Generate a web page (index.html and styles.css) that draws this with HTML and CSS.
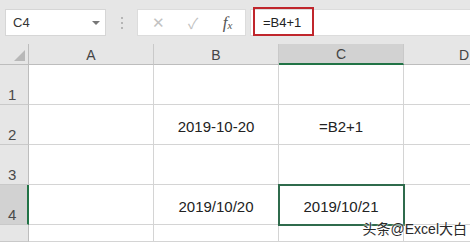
FILE: index.html
```html
<!DOCTYPE html>
<html lang="zh-CN">
<head>
    <meta charset="UTF-8">
    <meta name="viewport" content="width=device-width, initial-scale=1.0">
    <title>Excel</title>
    <link rel="stylesheet" href="styles.css">
</head>
<body>
    <div class="toolbar">
        <div class="namebox">
            <span>C4</span>
            <span class="caret"></span>
        </div>
        <div class="grip"><i></i><i></i><i></i></div>
        <div class="tools">
            <span class="tool">&#x2715;</span>
            <span class="tool">&#x2713;</span>
            <span class="tool fx">f<sub>x</sub></span>
        </div>
        <div class="formula">
            <span class="mark">=B4+1</span>
        </div>
    </div>

    <div class="sheet">
        <div class="corner"><span class="tri"></span></div>
        <div class="colhead">A</div>
        <div class="colhead">B</div>
        <div class="colhead active">C</div>
        <!-- column D runs past the window, so its letter sits at the edge -->
        <div class="colhead edge">D</div>

        <div class="rowhead">1</div>
        <div class="cell"></div>
        <div class="cell"></div>
        <div class="cell"></div>
        <div class="cell"></div>

        <div class="rowhead">2</div>
        <div class="cell"></div>
        <div class="cell">2019-10-20</div>
        <div class="cell">=B2+1</div>
        <div class="cell"></div>

        <div class="rowhead">3</div>
        <div class="cell"></div>
        <div class="cell"></div>
        <div class="cell"></div>
        <div class="cell"></div>

        <div class="rowhead active">4</div>
        <div class="cell"></div>
        <div class="cell">2019/10/20</div>
        <div class="cell selected">2019/10/21</div>
        <div class="cell"></div>

        <!-- row 5: only its top edge is in view -->
        <div class="rowhead"></div>
        <div class="cell"></div>
        <div class="cell"></div>
        <div class="cell"></div>
        <div class="cell"></div>
    </div>

    <div class="watermark">头条@Excel大白</div>
</body>
</html>
```

FILE: styles.css
```css
body {
    margin: 0;
    width: 470px;
    height: 242px;
    overflow: hidden;
    background-color: #e6e6e6;
    font-family: 'Liberation Sans', 'Noto Sans CJK SC', sans-serif;
    color: #222;
    position: relative;
}

.toolbar {
    display: flex;
    align-items: flex-start;
    height: 44px;
    padding-top: 9px;
    box-sizing: border-box;
}

.namebox {
    display: flex;
    align-items: center;
    justify-content: space-between;
    margin-left: 5px;
    width: 101px;
    height: 27px;
    box-sizing: border-box;
    padding: 0 5px 0 7px;
    background-color: #fff;
    border: 1px solid #d6d6d6;
    font-size: 13px;
    color: #333;
}

.caret {
    width: 0;
    height: 0;
    border-left: 4px solid transparent;
    border-right: 4px solid transparent;
    border-top: 4px solid #777;
}

.grip {
    display: flex;
    flex-direction: column;
    align-items: center;
    gap: 3px;
    width: 31px;
    padding-top: 8px;
}

.grip i {
    width: 2px;
    height: 2px;
    background-color: #b5b5b5;
}

.tools {
    display: flex;
    align-items: center;
    width: 109px;
    height: 27px;
    box-sizing: border-box;
    background-color: #fff;
    border: 1px solid #dcdcdc;
}

.tool {
    width: 35px;
    text-align: center;
    font-size: 15px;
    color: #c2c2c2;
}

.tool:first-child {
    margin-left: 3px;
}

.fx {
    font-family: 'Liberation Serif', serif;
    font-style: italic;
    font-size: 17px;
    color: #555;
}

.fx sub {
    font-size: 11px;
    vertical-align: -1px;
}

.formula {
    position: relative;
    margin-left: 4px;
    flex: 1;
    height: 27px;
    background-color: #fff;
    border: 1px solid #dcdcdc;
    border-right: 0;
    box-sizing: border-box;
}

.mark {
    position: absolute;
    left: 2px;
    top: -3px;
    width: 61px;
    height: 29px;
    box-sizing: border-box;
    border: 2px solid #c0262c;
    padding: 6px 0 0 8px;
    font-size: 13px;
    color: #222;
}

.sheet {
    display: grid;
    grid-template-columns: 29px repeat(3, 125px) 1fr;
    grid-template-rows: 21px repeat(4, 40px) 17px;
    background-color: #fff;
}

.corner,
.colhead,
.rowhead,
.cell {
    box-sizing: border-box;
    border-right: 1px solid #d4d4d4;
    border-bottom: 1px solid #d4d4d4;
}

.corner {
    position: relative;
    background-color: #e6e6e6;
    border-color: #bdbdbd;
}

.tri {
    position: absolute;
    right: 3px;
    bottom: 3px;
    width: 0;
    height: 0;
    border-left: 11px solid transparent;
    border-bottom: 11px solid #b8b8b8;
}

.colhead {
    background-color: #e6e6e6;
    border-bottom-color: #bdbdbd;
    border-right-color: #c9c9c9;
    text-align: center;
    font-size: 14px;
    line-height: 22px;
    color: #444;
}

.colhead.edge {
    text-align: left;
    padding-left: 55px;
    border-right: 0;
    overflow: hidden;
    white-space: nowrap;
}

.colhead.active {
    background-color: #d2d2d2;
    border-bottom: 2px solid #217346;
    line-height: 21px;
}

.rowhead {
    display: flex;
    align-items: flex-end;
    padding: 0 0 1px 8px;
    background-color: #e6e6e6;
    border-right-color: #bdbdbd;
    border-bottom-color: #c9c9c9;
    font-size: 15px;
    color: #4a4a4a;
}

.rowhead.active {
    background-color: #d2d2d2;
    border-right: 2px solid #217346;
}

.cell {
    display: flex;
    align-items: center;
    justify-content: center;
    padding-top: 3px;
    font-size: 15px;
    color: #222;
}

.cell:nth-child(5n) {
    border-right: 0;
}

.cell.selected {
    position: relative;
    outline: 2px solid #2f6b4c;
    outline-offset: -1px;
}

.watermark {
    position: absolute;
    right: 3px;
    bottom: 4px;
    font-size: 14px;
    color: #2a2a2a;
    text-shadow: 0 0 2px #fff, 0 0 2px #fff;
}
```
